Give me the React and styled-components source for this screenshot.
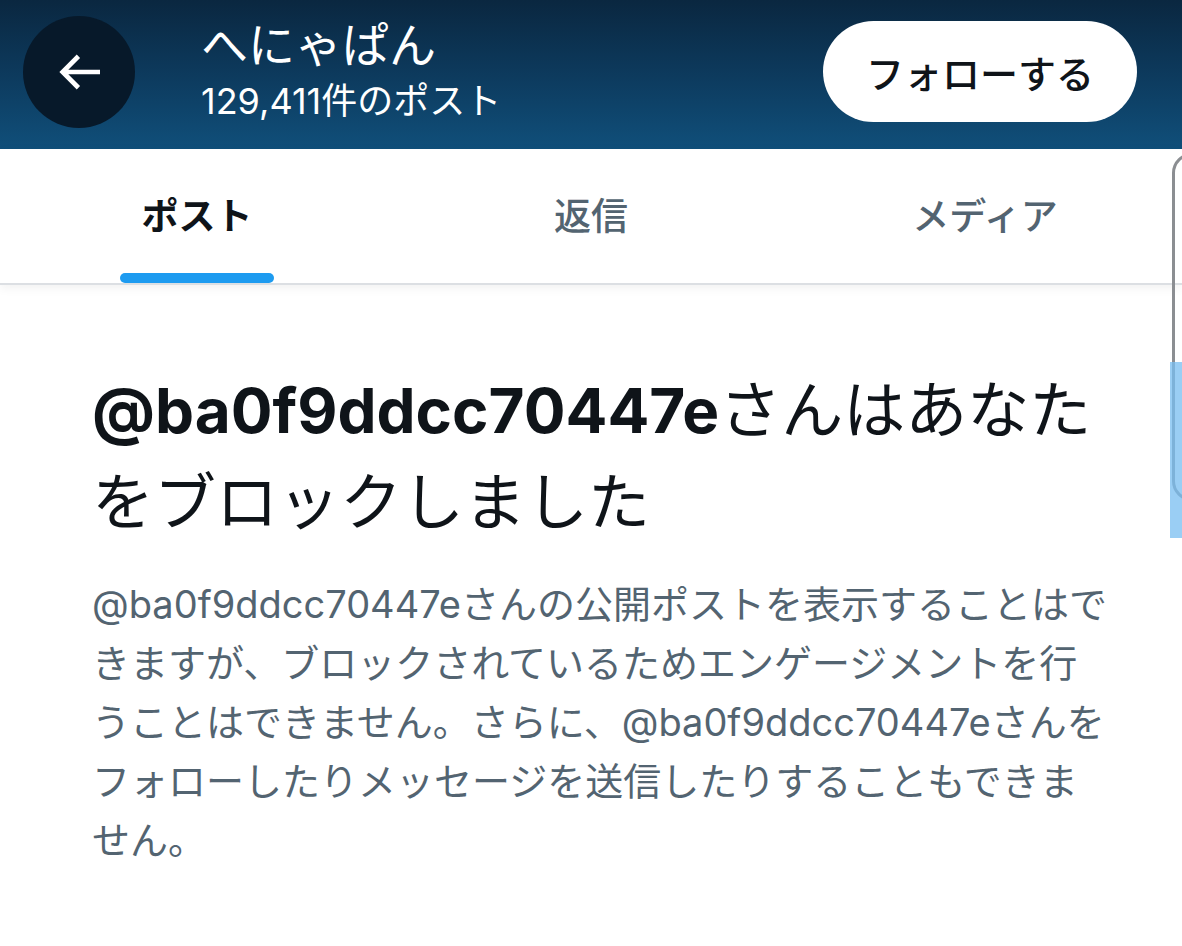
import React from "react";
import styled, { createGlobalStyle } from "styled-components";

const GlobalStyle = createGlobalStyle`
  html, body {
    margin: 0;
    padding: 0;
    background: #fff;
  }
  body {
    font-family: Inter, "Noto Sans CJK JP", sans-serif;
    -webkit-font-smoothing: antialiased;
  }
`;

const Page = styled.div`
  position: relative;
  width: 1182px;
  height: 946px;
  overflow: hidden;
  background: #fff;
`;

const Header = styled.header`
  height: 149px;
  display: flex;
  align-items: center;
  padding: 0 45px 6px 23px;
  box-sizing: border-box;
  background: linear-gradient(180deg, #0a2740 0%, #0d3c60 55%, #104f7a 100%);
`;

const BackButton = styled.button`
  width: 112px;
  height: 112px;
  border-radius: 50%;
  border: none;
  background: #07192a;
  display: flex;
  align-items: center;
  justify-content: center;
  padding: 0;
  flex-shrink: 0;
`;

const TitleBlock = styled.div`
  display: flex;
  flex-direction: column;
  margin-left: 66px;
  flex: 1;
  color: #fff;
  padding-top: 4px;
`;

const Title = styled.div`
  font-size: 47px;
  line-height: 56px;
  font-weight: 400;
  margin-top: -8px;
`;

const Subtitle = styled.div`
  font-size: 36px;
  line-height: 44px;
  margin-top: 6px;
`;

const FollowButton = styled.button`
  width: 314px;
  height: 101px;
  border-radius: 51px;
  border: none;
  background: #fff;
  color: #0f1419;
  font-family: Inter, "Noto Sans CJK JP", sans-serif;
  font-size: 38px;
  font-weight: 500;
`;

const TabBar = styled.nav`
  display: grid;
  grid-template-columns: repeat(3, 1fr);
  height: 134px;
  border-bottom: 2px solid #dcdfe3;
  box-shadow: 0 3px 10px rgba(0, 0, 0, 0.06);
  background: #fff;
`;

const Tab = styled.div`
  position: relative;
  display: flex;
  align-items: center;
  justify-content: center;
  font-size: 37px;
  font-weight: ${(p) => (p.$active ? 700 : 500)};
  color: ${(p) => (p.$active ? "#0f1419" : "#536471")};
  padding-bottom: 5px;
`;

const Indicator = styled.span`
  position: absolute;
  bottom: 0;
  left: 50%;
  transform: translateX(-50%);
  width: 154px;
  height: 10px;
  border-radius: 5px;
  background: #1d9bf0;
`;

const Content = styled.section`
  padding: 80px 60px 0 92px;
`;

const Heading = styled.h1`
  margin: 0;
  font-size: 62px;
  line-height: 92px;
  font-weight: 400;
  color: #0f1419;
`;

const Handle = styled.span`
  font-weight: 700;
`;

const Body = styled.p`
  margin: 26px 0 0;
  width: 1020px;
  font-size: 38px;
  line-height: 59px;
  color: #536471;
`;

const ScrollTrack = styled.div`
  position: absolute;
  top: 153px;
  left: 1172px;
  width: 40px;
  height: 348px;
  border: 3px solid #8b8e92;
  border-radius: 26px;
  box-sizing: border-box;
`;

const ScrollThumb = styled.div`
  position: absolute;
  top: 362px;
  left: 1170px;
  width: 20px;
  height: 176px;
  background: rgba(120, 190, 240, 0.75);
`;

const BackArrow = () => (
  <svg width="56" height="56" viewBox="0 0 24 24" fill="#fff">
    <path d="M7.414 13l5.043 5.04-1.414 1.42L3.586 12l7.457-7.46 1.414 1.42L7.414 11H21v2H7.414z" />
  </svg>
);

export default function App() {
  return (
    <Page>
      <GlobalStyle />
      <Header>
        <BackButton aria-label="戻る">
          <BackArrow />
        </BackButton>
        <TitleBlock>
          <Title>へにゃぱん</Title>
          <Subtitle>129,411件のポスト</Subtitle>
        </TitleBlock>
        <FollowButton>フォローする</FollowButton>
      </Header>

      <TabBar>
        <Tab $active>
          ポスト
          <Indicator />
        </Tab>
        <Tab>返信</Tab>
        <Tab>メディア</Tab>
      </TabBar>

      <Content>
        <Heading>
          <Handle>@ba0f9ddcc70447e</Handle>さんはあなたをブロックしました
        </Heading>
        <Body>
          @ba0f9ddcc70447eさんの公開ポストを表示することはできますが、ブロックされているためエンゲージメントを行うことはできません。さらに、@ba0f9ddcc70447eさんをフォローしたりメッセージを送信したりすることもできません。
        </Body>
      </Content>

      <ScrollTrack />
      <ScrollThumb />
    </Page>
  );
}
